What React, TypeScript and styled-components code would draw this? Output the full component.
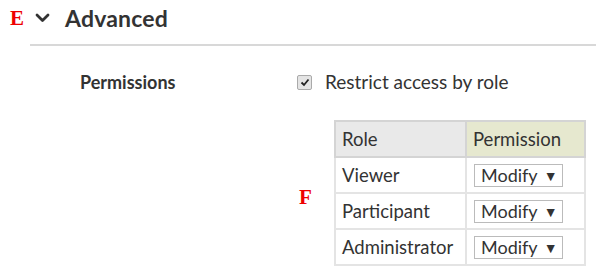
import React from "react";
import styled, { createGlobalStyle } from "styled-components";

const Global = createGlobalStyle`
  html, body { margin: 0; padding: 0; background: #fff; }
  body { font-family: Lato, "Open Sans", sans-serif; color: #333; }
`;

const Page = styled.div`
  width: 600px;
  height: 280px;
  box-sizing: border-box;
  padding: 4px 4px 0 10px;
  overflow: hidden;
`;

const Header = styled.div`
  display: flex;
  align-items: center;
  height: 28px;
`;

const Marker = styled.span`
  font-family: "Liberation Serif", serif;
  font-weight: bold;
  color: #e00;
  font-size: 21px;
  line-height: 1;
  width: 22px;
`;

const Chevron = styled.svg`
  width: 15px;
  height: 10px;
  margin-left: 3px;
  margin-right: 15px;
`;

const Title = styled.h2`
  margin: 0;
  font-size: 23px;
  font-weight: 700;
  color: #333;
  letter-spacing: 0.2px;
`;

const Rule = styled.hr`
  border: none;
  border-top: 2px solid #d8d8d8;
  margin: 12px 0 0 20px;
  width: 566px;
`;

const FieldRow = styled.div`
  display: grid;
  grid-template-columns: 287px 1fr;
  margin-top: 25px;
`;

const Label = styled.div`
  padding-left: 70px;
  font-size: 18px;
  font-weight: 700;
  color: #333;
  line-height: 22px;
`;

const Control = styled.div`
  display: flex;
  flex-direction: column;
`;

const CheckLine = styled.label`
  display: flex;
  align-items: center;
  font-size: 19px;
  color: #333;
  line-height: 22px;
`;

const Box = styled.span`
  width: 13px;
  height: 13px;
  border: 1px solid #aaa;
  border-radius: 2px;
  background: #e4e4e4;
  display: inline-flex;
  align-items: center;
  justify-content: center;
  margin-right: 13px;
`;

const TableArea = styled.div`
  display: flex;
  align-items: center;
  margin-top: 27px;
`;

const Spacer = styled.div`
  width: 289px;
  flex: none;
`;

const MarkerF = styled(Marker)`
  width: 35px;
  margin-top: 8px;
`;

const Table = styled.table`
  border-collapse: collapse;
  border: 2px solid #c8c8c8;
  font-size: 18.5px;
  color: #333;
`;

const Th = styled.th<{ $bg: string; $w: number }>`
  background: ${(p) => p.$bg};
  width: ${(p) => p.$w}px;
  text-align: left;
  font-weight: 400;
  height: 36px;
  padding: 0 6px;
  box-sizing: border-box;
  border: 2px solid #d4d4d4;
`;

const Td = styled.td`
  height: 36px;
  padding: 0 6px;
  border: 2px solid #e4e4e4;
  box-sizing: border-box;
`;

const Select = styled.span`
  display: inline-flex;
  align-items: center;
  width: 89px;
  height: 23px;
  box-sizing: border-box;
  border: 1px solid #bbb;
  padding: 0 6px;
  font-size: 18px;
  color: #333;
  background: #fff;
  margin-left: 1px;
`;

const Arrow = styled.span`
  font-size: 14px;
  margin-left: 6px;
`;

const roles = ["Viewer", "Participant", "Administrator"];

export default function App() {
  return (
    <Page>
      <Global />
      <Header>
        <Marker>E</Marker>
        <Chevron viewBox="0 0 15 10">
          <path d="M2 2 L7.5 7.5 L13 2" fill="none" stroke="#333" strokeWidth="2.8" strokeLinecap="round" strokeLinejoin="round" />
        </Chevron>
        <Title>Advanced</Title>
      </Header>
      <Rule />
      <FieldRow>
        <Label>Permissions</Label>
        <Control>
          <CheckLine>
            <Box>
              <svg width="10" height="9" viewBox="0 0 10 9">
                <path d="M1.5 4.5 L4 7 L8.5 1.5" fill="none" stroke="#222" strokeWidth="1.8" />
              </svg>
            </Box>
            Restrict access by role
          </CheckLine>
        </Control>
      </FieldRow>
      <TableArea>
        <Spacer />
        <MarkerF>F</MarkerF>
        <Table>
          <thead>
            <tr>
              <Th $bg="#e9e9e9" $w={131}>Role</Th>
              <Th $bg="#e6e8cf" $w={119}>Permission</Th>
            </tr>
          </thead>
          <tbody>
            {roles.map((r) => (
              <tr key={r}>
                <Td>{r}</Td>
                <Td>
                  <Select>
                    Modify<Arrow>▼</Arrow>
                  </Select>
                </Td>
              </tr>
            ))}
          </tbody>
        </Table>
      </TableArea>
    </Page>
  );
}
